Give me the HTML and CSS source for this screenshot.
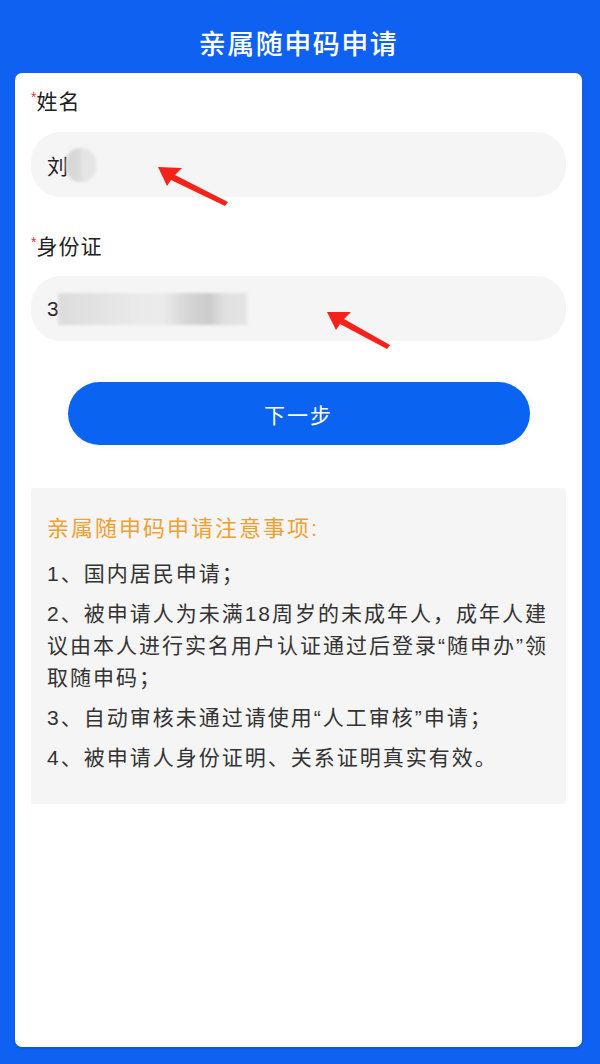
FILE: index.html
```html
<!DOCTYPE html>
<html lang="zh">
<head>
<meta charset="utf-8">
<link rel="stylesheet" href="styles.css">
</head>
<body>
<div class="page">
  <header class="header">亲属随申码申请</header>
  <main class="card">
    <div class="field">
      <div class="label"><span class="star">*</span>姓名</div>
      <div class="input">
        <span class="value">刘</span><span class="blur blur-name"></span>
      </div>
    </div>
    <div class="field">
      <div class="label"><span class="star">*</span>身份证</div>
      <div class="input">
        <span class="value">3</span><span class="blur blur-id"></span>
      </div>
    </div>
    <div class="btn-wrap"><button class="btn">下一步</button></div>
    <section class="notice">
      <h2 class="notice-title">亲属随申码申请注意事项:</h2>
      <p>1、国内居民申请；</p>
      <p>2、被申请人为未满18周岁的未成年人，成年人建议由本人进行实名用户认证通过后登录“随申办”领取随申码；</p>
      <p>3、自动审核未通过请使用“人工审核”申请；</p>
      <p>4、被申请人身份证明、关系证明真实有效。</p>
    </section>
  </main>
  <svg class="arrow arrow-1" width="90" height="60" viewBox="0 0 90 60"><polygon points="2,2 26,3 19,10 72,37 69,41 15,15 11,21" fill="#f5221b"/></svg>
  <svg class="arrow arrow-2" width="90" height="60" viewBox="0 0 90 60"><polygon points="2,2 26,2 19,9 65,35 62,39 15,14 11,20" fill="#f5221b"/></svg>
</div>
</body>
</html>
```

FILE: styles.css
```css
* { box-sizing: border-box; margin: 0; padding: 0; }
html, body { width: 600px; height: 1064px; }
body {
  background: #0f62f1;
  font-family: "Liberation Sans", "Noto Sans CJK SC", sans-serif;
  overflow: hidden;
}
.page {
  position: relative;
  height: 1064px;
  padding: 0 18px 17px 15px;
  display: flex;
  flex-direction: column;
}
.header {
  height: 73px;
  padding-top: 26px;
  text-align: center;
  color: #fff;
  font-size: 27px;
  font-weight: 500;
  line-height: 38px;
  letter-spacing: 1.5px;
}
.card {
  flex: 1;
  background: #fff;
  border-radius: 7px;
  padding: 14px 16px 0 16px;
  box-shadow: 0 2px 3px rgba(0,0,0,0.15);
}
.field + .field { margin-top: 35px; }
.label {
  font-size: 21px;
  letter-spacing: 1px;
  color: #222;
  line-height: 30px;
  height: 30px;
  display: flex;
  align-items: flex-start;
  margin-bottom: 15px;
}
.field + .field .label { margin-bottom: 14px; }
.star {
  color: #e3342f;
  font-size: 14px;
  line-height: 14px;
  margin-top: 3px;
  margin-right: 0;
  letter-spacing: 0;
}
.input {
  height: 65px;
  border-radius: 30px;
  background: #f5f5f5;
  display: flex;
  align-items: center;
  padding-left: 16px;
}
.value {
  font-size: 21px;
  color: #222;
}
.blur { display: inline-block; filter: blur(1.5px); }
.blur-name {
  width: 30px; height: 34px; border-radius: 45%;
  margin-left: -2px;
  background: linear-gradient(90deg, #d6d6d6 0%, #d9d9d9 40%, #e6e6e6 60%, #e4e4e4 100%);
}
.blur-id {
  width: 189px; height: 32px; margin-left: -1px;
  background: linear-gradient(90deg, #dcdcdc 0%, #e2e2e2 20%, #e9e9e9 40%, #ebebeb 55%, #d6d6d6 68%, #cbcbcb 80%, #e0e0e0 88%, #e4e4e4 100%);
}
.btn-wrap {
  display: flex;
  justify-content: center;
  margin-top: 41px;
}
.btn {
  width: 462px;
  height: 63px;
  border: none;
  border-radius: 32px;
  background: #0b63f1;
  color: #fff;
  font-family: inherit;
  font-size: 21px;
  letter-spacing: 2px;
  box-shadow: 0 0 8px rgba(0,0,0,0.04);
}
.notice {
  margin-top: 43px;
  background: #f5f5f5;
  border-radius: 3px;
  padding: 25px 8px 30px 16px;
  height: 316px;
}
.notice-title {
  font-size: 22px;
  font-weight: 400;
  color: #f0a030;
  line-height: 32px;
  letter-spacing: 2px;
  margin-bottom: 13px;
}
.notice p {
  font-size: 21px;
  color: #333;
  line-height: 32px;
  letter-spacing: 2px;
  margin-bottom: 8px;
}
.arrow { position: absolute; }
.arrow-1 { left: 156px; top: 165px; }
.arrow-2 { left: 325px; top: 310px; }
```
